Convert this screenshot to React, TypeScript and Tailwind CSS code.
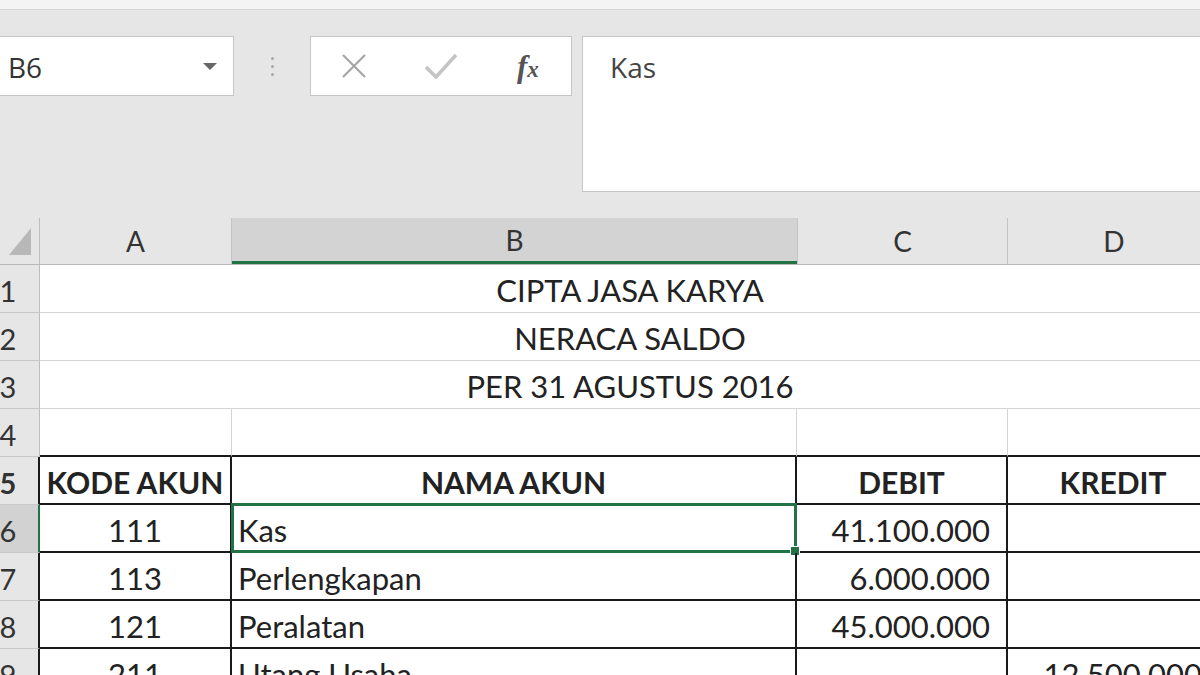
const cellFont = { fontFamily: "Lato, 'Noto Sans', sans-serif" };
const uiFont = { fontFamily: "'Open Sans', 'Noto Sans', sans-serif" };

type Row = { n: number; a: string; b: string; c: string; d: string };

const rows: Row[] = [
  { n: 6, a: "111", b: "Kas", c: "41.100.000", d: "" },
  { n: 7, a: "113", b: "Perlengkapan", c: "6.000.000", d: "" },
  { n: 8, a: "121", b: "Peralatan", c: "45.000.000", d: "" },
  { n: 9, a: "211", b: "Utang Usaha", c: "", d: "12.500.000" },
];

function RowHead({ n, active, dark }: { n: number; active?: boolean; dark?: boolean }) {
  return (
    <div
      className={
        "w-[40px] shrink-0 overflow-hidden flex items-center border-b border-b-[#c8c8c8] " +
        (active
          ? "bg-[#d2d2d2] border-r-2 border-r-[#217346]"
          : dark
          ? "bg-[#e6e6e6] border-r-2 border-r-[#1a1a1a]"
          : "bg-[#e6e6e6] border-r border-r-[#bdbdbd]")
      }
    >
      <div className="w-[56px] -ml-[20px] shrink-0 text-center text-[29px] leading-none pt-[4px] text-[#333]" style={cellFont}>
        {n}
      </div>
    </div>
  );
}

export default function App() {
  return (
    <div className="w-[1200px] h-[675px] overflow-hidden bg-[#e6e6e6] text-[#222]">
      {/* window title strip */}
      <div className="h-[10px] bg-[#f4f4f4] border-b border-[#d6d6d6]" />

      {/* name box + formula bar */}
      <div className="h-[208px] flex items-start pt-[26px]">
        <div className="w-[236px] -ml-[2px] shrink-0 h-[60px] bg-white border border-[#c6c6c6] flex items-center justify-between pl-[9px] pr-[15px]">
          <span className="text-[28px] text-[#333] pt-[1px]" style={uiFont}>
            B6
          </span>
          <svg width="16" height="9" viewBox="0 0 16 9">
            <path d="M1 1 L15 1 L8 8 Z" fill="#666" />
          </svg>
        </div>
        <div className="w-[76px] shrink-0 h-[60px] flex flex-col items-center justify-center gap-[5px]">
          <div className="w-[3px] h-[3px] rounded-full bg-[#a8a8a8]" />
          <div className="w-[3px] h-[3px] rounded-full bg-[#a8a8a8]" />
          <div className="w-[3px] h-[3px] rounded-full bg-[#a8a8a8]" />
        </div>
        <div className="w-[262px] shrink-0 h-[60px] bg-white border border-[#c6c6c6] flex items-center">
          <div className="w-[87px] flex justify-center">
            <svg width="26" height="24" viewBox="0 0 26 24">
              <path d="M2 1 L24 23 M24 1 L2 23" stroke="#a3a3a3" strokeWidth="2" fill="none" />
            </svg>
          </div>
          <div className="w-[88px] flex justify-center">
            <svg width="34" height="28" viewBox="0 0 34 28">
              <path d="M2 15 L12 25 L32 3" stroke="#c4c4c4" strokeWidth="3.5" fill="none" />
            </svg>
          </div>
          <div className="w-[87px] flex justify-center">
            <span className="italic font-bold text-[#555] leading-none" style={{ fontFamily: "'Liberation Serif', serif" }}>
              <span className="text-[31px]">f</span>
              <span className="text-[23px]">x</span>
            </span>
          </div>
        </div>
        <div className="ml-[10px] flex-1 -mr-[4px] h-[156px] bg-white border border-[#c6c6c6] pl-[27px] pt-[9px]">
          <span className="text-[28px] text-[#444]" style={uiFont}>
            Kas
          </span>
        </div>
      </div>

      {/* column headers */}
      <div className="flex h-[47px] border-b border-[#b8b8b8]">
        <div className="w-[40px] shrink-0 flex items-end pb-[9px] pl-[9px] border-r border-[#bdbdbd]">
          <svg width="23" height="27" viewBox="0 0 23 27">
            <path d="M22 0 L22 27 L0 27 Z" fill="#b8b8b8" />
          </svg>
        </div>
        <div className="w-[192px] shrink-0 flex items-center justify-center text-[28px] text-[#333] border-r border-[#c4c4c4]" style={cellFont}>
          A
        </div>
        <div className="w-[565px] shrink-0 flex items-center justify-center text-[28px] text-[#333] bg-[#d3d3d3] border-b-[3px] border-[#217346]" style={cellFont}>
          B
        </div>
        <div className="w-[211px] shrink-0 flex items-center justify-center text-[28px] text-[#333] border-l border-r border-[#c4c4c4]" style={cellFont}>
          C
        </div>
        <div className="w-[212px] shrink-0 flex items-center justify-center text-[28px] text-[#333]" style={cellFont}>
          D
        </div>
      </div>

      {/* sheet */}
      <div className="bg-white" style={cellFont}>
        {["CIPTA JASA KARYA", "NERACA SALDO", "PER 31 AGUSTUS 2016"].map((t, i) => (
          <div key={t} className="flex h-[48px]">
            <RowHead n={i + 1} />
            <div className="w-[1180px] shrink-0 flex items-center justify-center text-[31px] pt-[4px] border-b border-[#d4d4d4]">
              {t}
            </div>
          </div>
        ))}

        <div className="flex h-[48px]">
          <RowHead n={4} />
          <div className="w-[192px] shrink-0 border-r border-[#d4d4d4] border-b-2 border-b-[#1a1a1a]" />
          <div className="w-[565px] shrink-0 border-r border-[#d4d4d4] border-b-2 border-b-[#1a1a1a]" />
          <div className="w-[211px] shrink-0 border-r border-[#d4d4d4] border-b-2 border-b-[#1a1a1a]" />
          <div className="w-[212px] shrink-0 border-b-2 border-b-[#1a1a1a]" />
        </div>

        <div className="flex h-[48px] font-bold text-[30px]">
          <RowHead n={5} dark />
          <div className="w-[192px] shrink-0 flex items-center justify-center pt-[4px] border-r-2 border-b-2 border-[#1a1a1a]">KODE AKUN</div>
          <div className="w-[565px] shrink-0 flex items-center justify-center pt-[4px] border-r-2 border-b-2 border-[#1a1a1a]">NAMA AKUN</div>
          <div className="w-[211px] shrink-0 flex items-center justify-center pt-[4px] border-r-2 border-b-2 border-[#1a1a1a]">DEBIT</div>
          <div className="w-[212px] shrink-0 flex items-center justify-center pt-[4px] border-r-2 border-b-2 border-[#1a1a1a]">KREDIT</div>
        </div>

        {rows.map((r) => (
          <div key={r.n} className="flex h-[48px] text-[31px]">
            <RowHead n={r.n} active={r.n === 6} dark />
            <div className="w-[192px] shrink-0 flex items-center justify-center pt-[4px] border-r-2 border-b-2 border-[#1a1a1a]">{r.a}</div>
            <div className="relative w-[565px] shrink-0 flex items-center pl-[6px] pt-[4px] border-r-2 border-b-2 border-[#1a1a1a]">
              {r.b}
              {r.n === 6 && (
                <div className="absolute -left-[1px] -top-[2px] -right-[2px] -bottom-[2px] border-[3px] border-[#217346]">
                  <div className="absolute -right-[6px] -bottom-[6px] w-[10px] h-[10px] bg-[#217346] border border-white" />
                </div>
              )}
            </div>
            <div className="w-[211px] shrink-0 flex items-center justify-end pr-[16px] pt-[4px] border-r-2 border-b-2 border-[#1a1a1a]">{r.c}</div>
            <div className="w-[212px] shrink-0 flex items-center justify-end pr-[16px] pt-[4px] border-r-2 border-b-2 border-[#1a1a1a]">{r.d}</div>
          </div>
        ))}
      </div>
    </div>
  );
}
